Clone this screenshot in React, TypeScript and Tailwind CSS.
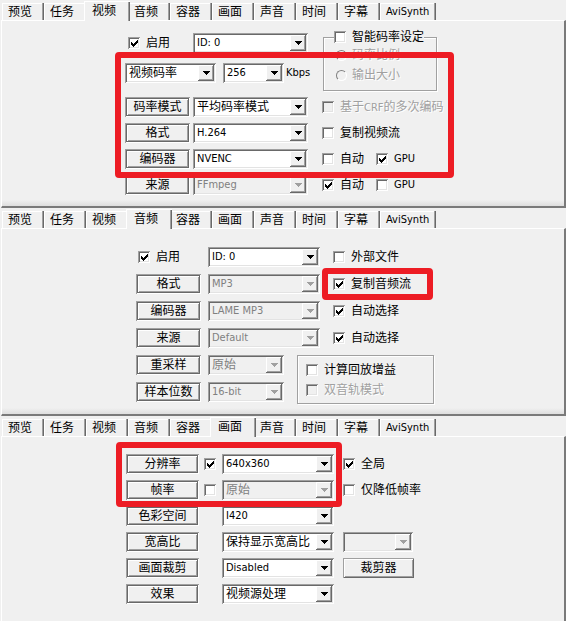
import { useState, type ReactNode } from "react";

const TABS = ["预览", "任务", "视频", "音频", "容器", "画面", "声音", "时间", "字幕", "AviSynth"];

const isLatin = (text: string) => /^[\x20-\x7e]*$/.test(text);

function Panel({
  active,
  last = false,
  className,
  children,
}: {
  active: string;
  last?: boolean;
  className: string;
  children: ReactNode;
}) {
  return (
    <section className="relative">
      <div role="tablist" className="flex h-5 items-end pl-0.5">
        {TABS.map((tab) => {
          const selected = tab === active;
          const size = isLatin(tab) ? "text-[11px]" : "text-xs";
          return (
            <button
              key={tab}
              type="button"
              role="tab"
              aria-selected={selected}
              className={`${size} whitespace-nowrap bg-[#f0f0f0] text-left leading-4 ${
                selected
                  ? "relative z-10 -mx-0.5 -mb-px h-5 w-[46px] pl-2 shadow-[inset_1px_1px_#fff,inset_-1px_0_#696969,inset_-2px_0_#a0a0a0]"
                  : `h-[17px] pt-px pl-1.5 ${isLatin(tab) ? "w-14" : "w-[42px]"} shadow-[inset_-1px_0_#696969,inset_-2px_0_#a0a0a0,inset_1px_1px_#fff]`
              }`}
            >
              {tab}
            </button>
          );
        })}
      </div>
      <div
        className={`ml-px border-r-2 border-t border-l border-t-white border-l-white border-r-[#7a7a7a] ${
          last
            ? ""
            : "border-b-2 border-b-[#7a7a7a] bg-[linear-gradient(to_top,#dedede,#f0f0f0_6px)]"
        } ${className}`}
      >
        {children}
      </div>
    </section>
  );
}

function Combo({
  label,
  value,
  disabled = false,
  className,
}: {
  label: string;
  value: string;
  disabled?: boolean;
  className: string;
}) {
  return (
    <div className={`relative h-5 shrink-0 ${className}`}>
      <select
        aria-label={label}
        disabled={disabled}
        className={`block h-5 w-full appearance-none pr-5 pl-1 leading-5 opacity-100 shadow-[inset_1px_1px_#a0a0a0,inset_-1px_-1px_#fff,inset_2px_2px_#696969,inset_-2px_-2px_#e3e3e3] ${
          isLatin(value) ? "text-[11px]" : "text-xs"
        } ${disabled ? "bg-[#f0f0f0] text-[#808080]" : "bg-white text-black"}`}
      >
        <option>{value}</option>
      </select>
      <span className="pointer-events-none absolute top-0.5 right-0.5 flex h-4 w-4 items-center justify-center bg-[#f0f0f0] shadow-[inset_-1px_-1px_#696969,inset_1px_1px_#fff,inset_-2px_-2px_#a0a0a0]">
        <svg width="7" height="4" shapeRendering="crispEdges" aria-hidden="true">
          <path d="M0 0h7v1h-1v1h-1v1h-1v1h-1v-1h-1v-1h-1v-1h-1z" fill={disabled ? "#a0a0a0" : "#000"} />
        </svg>
      </span>
    </div>
  );
}

function FieldButton({ className, children }: { className: string; children: ReactNode }) {
  return (
    <button
      type="button"
      className={`h-5 shrink-0 bg-[#f0f0f0] text-xs leading-5 shadow-[inset_1px_1px_#a0a0a0,inset_-1px_-1px_#fff,inset_2px_2px_#696969,inset_-2px_-2px_#696969,inset_3px_3px_#fff,inset_-3px_-3px_#a0a0a0] ${className}`}
    >
      {children}
    </button>
  );
}

function Check({
  checked = false,
  disabled = false,
  label,
  className = "",
  children,
}: {
  checked?: boolean;
  disabled?: boolean;
  label?: string;
  className?: string;
  children?: ReactNode;
}) {
  const [on, setOn] = useState(checked);
  return (
    <label
      className={`flex shrink-0 items-center gap-1.5 whitespace-nowrap ${
        disabled ? "text-[#a0a0a0] [text-shadow:1px_1px_#fff]" : ""
      } ${className}`}
    >
      <span className="relative size-3 shrink-0">
        <input
          type="checkbox"
          aria-label={label}
          checked={on}
          disabled={disabled}
          onChange={(e) => setOn(e.target.checked)}
          className={`block size-3 appearance-none shadow-[inset_1px_1px_#a0a0a0,inset_-1px_-1px_#fff,inset_2px_2px_#696969,inset_-2px_-2px_#e3e3e3] ${
            disabled ? "bg-[#f0f0f0]" : "bg-white"
          }`}
        />
        {on && (
          <svg
            className="pointer-events-none absolute top-0 left-0"
            width="12"
            height="12"
            shapeRendering="crispEdges"
            aria-hidden="true"
          >
            <path d="M3 5h1v1h1v1h1v-1h1v-1h1v-1h1v-1h1v3h-1v1h-1v1h-1v1h-1v1h-1v-1h-1v-1h-1z" fill="#000" />
          </svg>
        )}
      </span>
      {children}
    </label>
  );
}

function Radio({ children }: { children: ReactNode }) {
  return (
    <label className="flex h-5 items-center gap-[5px] text-[#a0a0a0] [text-shadow:1px_1px_#fff]">
      <input
        type="radio"
        name="smart-bitrate"
        disabled
        className="size-[11px] appearance-none rounded-full border border-t-[#808080] border-r-white border-b-white border-l-[#808080] bg-[#f0f0f0]"
      />
      {children}
    </label>
  );
}

const Latin = ({ children }: { children: ReactNode }) => <span className="text-[11px]">{children}</span>;

function Highlight({ className }: { className: string }) {
  return (
    <div
      aria-hidden="true"
      className={`pointer-events-none absolute z-20 rounded-sm border-[#ed1c24] ${className}`}
    />
  );
}

const ROW = "flex h-5 items-center";
const ETCHED = "border border-[#a0a0a0] shadow-[1px_1px_#fff,inset_1px_1px_#fff]";

function VideoPanel() {
  return (
    <Panel active="视频" className="pt-2 pb-[11px] pl-[123px]">
      <div className="flex">
        <div className="flex w-[198px] flex-col gap-2.5 pt-1">
          <div className={ROW}>
            <Check checked className="w-[68px] pl-[3px]">启用</Check>
            <Combo label="视频轨" value="ID: 0" className="w-[115px]" />
          </div>
          <div className={ROW}>
            <Combo label="码率类型" value="视频码率" className="w-[91px]" />
            <Combo label="码率" value="256" className="ml-[7px] w-[61px]" />
            <span className="ml-0.5 text-[11px]">Kbps</span>
          </div>
        </div>
        <fieldset className={`h-[62px] w-[114px] pl-3 ${ETCHED}`}>
          <legend className="-ml-0.5 bg-[#f0f0f0] leading-4">
            <Check>智能码率设定</Check>
          </legend>
          <Radio>码率比例</Radio>
          <Radio>输出大小</Radio>
        </fieldset>
      </div>
      <div className="mt-1.5 flex flex-col gap-1.5">
        <div className={ROW}>
          <FieldButton className="w-[65px]">码率模式</FieldButton>
          <Combo label="码率模式" value="平均码率模式" className="ml-[3px] w-[115px]" />
          <Check disabled className="ml-3.5">
            <span>
              基于<Latin>CRF</Latin>的多次编码
            </span>
          </Check>
        </div>
        <div className={ROW}>
          <FieldButton className="w-[65px]">格式</FieldButton>
          <Combo label="格式" value="H.264" className="ml-[3px] w-[115px]" />
          <Check className="ml-3.5">复制视频流</Check>
        </div>
        <div className={ROW}>
          <FieldButton className="w-[65px]">编码器</FieldButton>
          <Combo label="编码器" value="NVENC" className="ml-[3px] w-[115px]" />
          <Check className="ml-3.5 w-[54px]">自动</Check>
          <Check checked>
            <Latin>GPU</Latin>
          </Check>
        </div>
        <div className={ROW}>
          <FieldButton className="w-[65px]">来源</FieldButton>
          <Combo label="来源" value="FFmpeg" disabled className="ml-[3px] w-[115px]" />
          <Check checked className="ml-3.5 w-[54px]">自动</Check>
          <Check>
            <Latin>GPU</Latin>
          </Check>
        </div>
      </div>
      <Highlight className="top-[52px] left-[115px] h-[126px] w-[339px] border-[6px]" />
    </Panel>
  );
}

function AudioPanel() {
  return (
    <Panel active="音频" className="flex flex-col gap-[7px] pt-[18px] pb-3 pl-[134px]">
      <div className={ROW}>
        <Check checked className="w-[72px] pl-0.5">启用</Check>
        <Combo label="音频轨" value="ID: 0" className="w-28" />
        <Check className="ml-[13px]">外部文件</Check>
      </div>
      <div className={ROW}>
        <FieldButton className="w-[65px]">格式</FieldButton>
        <Combo label="格式" value="MP3" disabled className="ml-[7px] w-28" />
        <Check checked className="ml-[13px]">复制音频流</Check>
      </div>
      <div className={ROW}>
        <FieldButton className="w-[65px]">编码器</FieldButton>
        <Combo label="编码器" value="LAME MP3" disabled className="ml-[7px] w-28" />
        <Check checked className="ml-[13px]">自动选择</Check>
      </div>
      <div className={ROW}>
        <FieldButton className="w-[65px]">来源</FieldButton>
        <Combo label="来源" value="Default" disabled className="ml-[7px] w-28" />
        <Check checked className="ml-[13px]">自动选择</Check>
      </div>
      <div className="flex">
        <div className="flex flex-col gap-[7px]">
          <div className={ROW}>
            <FieldButton className="w-[65px]">重采样</FieldButton>
            <Combo label="重采样" value="原始" disabled className="ml-[7px] w-[76px]" />
          </div>
          <div className={ROW}>
            <FieldButton className="w-[65px]">样本位数</FieldButton>
            <Combo label="样本位数" value="16-bit" disabled className="ml-[7px] w-[76px]" />
          </div>
        </div>
        <fieldset className={`-mb-0.5 ml-[13px] flex w-[137px] flex-col justify-center pl-2 ${ETCHED}`}>
          <Check className="h-5">计算回放增益</Check>
          <Check disabled className="h-5">双音轨模式</Check>
        </fieldset>
      </div>
      <Highlight className="top-[60px] left-[322px] h-8 w-[111px] border-[6px]" />
    </Panel>
  );
}

function PicturePanel() {
  return (
    <Panel active="画面" last className="flex flex-col gap-1.5 pt-[17px] pb-[17px] pl-[124px]">
      <div className={ROW}>
        <FieldButton className="w-[73px]">分辨率</FieldButton>
        <Check checked label="启用分辨率" className="ml-[5px] w-[18px]" />
        <Combo label="分辨率" value="640x360" className="w-28" />
        <Check checked className="ml-[9px]">全局</Check>
      </div>
      <div className={ROW}>
        <FieldButton className="w-[73px]">帧率</FieldButton>
        <Check label="启用帧率" className="ml-[5px] w-[18px]" />
        <Combo label="帧率" value="原始" disabled className="w-28" />
        <Check className="ml-[9px]">仅降低帧率</Check>
      </div>
      <div className={ROW}>
        <FieldButton className="mr-[23px] w-[73px]">色彩空间</FieldButton>
        <Combo label="色彩空间" value="I420" className="w-28" />
      </div>
      <div className={ROW}>
        <FieldButton className="mr-[23px] w-[73px]">宽高比</FieldButton>
        <Combo label="宽高比" value="保持显示宽高比" className="w-28" />
        <Combo label="自定义宽高比" value="" disabled className="ml-[9px] w-[70px]" />
      </div>
      <div className={ROW}>
        <FieldButton className="mr-[23px] w-[73px]">画面裁剪</FieldButton>
        <Combo label="画面裁剪" value="Disabled" className="w-28" />
        <button
          type="button"
          className="ml-[9px] h-5 w-[71px] text-xs leading-5 shadow-[inset_1px_1px_#a0a0a0,inset_-1px_-1px_#696969,inset_2px_2px_#fff,inset_-2px_-2px_#a0a0a0]"
        >
          裁剪器
        </button>
      </div>
      <div className={ROW}>
        <FieldButton className="mr-[23px] w-[73px]">效果</FieldButton>
        <Combo label="效果" value="视频源处理" className="w-28" />
      </div>
      <Highlight className="top-[26px] left-[116px] h-[65px] w-[226px] border-[6px]" />
    </Panel>
  );
}

export default function App() {
  return (
    <main className="overflow-hidden bg-[#f0f0f0] font-['DejaVu_Sans_Condensed','Noto_Sans_CJK_SC',sans-serif] text-xs text-black">
      <VideoPanel />
      <AudioPanel />
      <PicturePanel />
    </main>
  );
}
